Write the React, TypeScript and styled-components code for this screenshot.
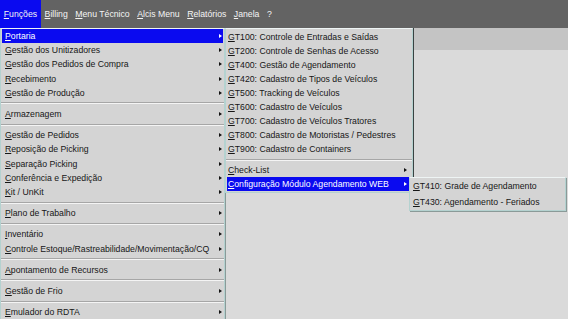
import styled, {createGlobalStyle} from "styled-components";
import React from "react";

const GlobalStyle = createGlobalStyle`
  html, body {
    margin: 0;
    padding: 0;
    background: #dadada;
    overflow: hidden;
  }
  body {
    font-family: "Liberation Sans", Arial, sans-serif;
    font-size: 8.7px;
    color: #161616;
  }
`
const Screen = styled.div`
  width: 568px;
  height: 319px;
  display: flex;
  flex-direction: column;
  overflow: hidden;
`
const MenuBar = styled.div`
  height: 28px;
  flex-shrink: 0;
  display: flex;
  align-items: stretch;
  background: #636363;
  position: relative;
  z-index: 2;
`
const BarItem = styled.div<{ $active?: boolean }>`
  position: relative;
  display: flex;
  align-items: center;
  padding: 0 3.75px;
  color: #f4f4f4;
  background: ${p => p.$active ? '#0a0af0' : 'transparent'};
  white-space: nowrap;
`
const Toolbar = styled.div`
  height: 22px;
  flex-shrink: 0;
  background: #c4c4c4;
`
const Canvas = styled.div`
  flex: 1;
  background: #dadada;
`
const Dropdown = styled.div<{ $width: number, $left: string, $top: string, $pad?: string, $shadow?: boolean }>`
  position: absolute;
  left: ${p => p.$left};
  top: ${p => p.$top};
  width: ${p => p.$width}px;
  box-sizing: border-box;
  background: #d4d4d4;
  border: 1px solid #b4d2d0;
  border-top-color: #eef4f4;
  padding: ${p => p.$pad || '0 1px'};
  box-shadow: ${p => p.$shadow ? '1px 0 0 #3a4242' : '1px 1px 0 #8a9a98'};
  color: #161616;
  z-index: 3;
`
const Item = styled.div<{ $active?: boolean, $h: number, $indent: number, $arrowGap: number }>`
  position: relative;
  display: flex;
  align-items: center;
  justify-content: space-between;
  height: ${p => p.$h}px;
  padding: 0 ${p => p.$arrowGap}px 0 ${p => p.$indent}px;
  background: ${p => p.$active ? '#0a0af0' : 'transparent'};
  color: ${p => p.$active ? '#ffffff' : '#161616'};
  white-space: nowrap;
`
const Arrow = styled.span<{ $active?: boolean }>`
  width: 0;
  height: 0;
  border-top: 2.5px solid transparent;
  border-bottom: 2.5px solid transparent;
  border-left: 3px solid ${p => p.$active ? '#ffffff' : '#111111'};
`
const Separator = styled.div`
  height: 0;
  margin: 2.5px -1px;
  border-top: 1px solid #a6a6a6;
  border-bottom: 1px solid #f4f4f4;
`

type Entry = { label: string, sub?: boolean } | 'sep'

const mainMenu: Entry[] = [
    {label: 'Portaria', sub: true},
    {label: 'Gestão dos Unitizadores', sub: true},
    {label: 'Gestão dos Pedidos de Compra', sub: true},
    {label: 'Recebimento', sub: true},
    {label: 'Gestão de Produção', sub: true},
    'sep',
    {label: 'Armazenagem', sub: true},
    'sep',
    {label: 'Gestão de Pedidos', sub: true},
    {label: 'Reposição de Picking', sub: true},
    {label: 'Separação Picking', sub: true},
    {label: 'Conferência e Expedição', sub: true},
    {label: 'Kit / UnKit', sub: true},
    'sep',
    {label: 'Plano de Trabalho', sub: true},
    'sep',
    {label: 'Inventário', sub: true},
    {label: 'Controle Estoque/Rastreabilidade/Movimentação/CQ', sub: true},
    'sep',
    {label: 'Apontamento de Recursos', sub: true},
    'sep',
    {label: 'Gestão de Frio', sub: true},
    'sep',
    {label: 'Emulador do RDTA', sub: true},
]

const portaria: Entry[] = [
    {label: 'GT100: Controle de Entradas e Saídas'},
    {label: 'GT200: Controle de Senhas de Acesso'},
    {label: 'GT400: Gestão de Agendamento'},
    {label: 'GT420: Cadastro de Tipos de Veículos'},
    {label: 'GT500: Tracking de Veículos'},
    {label: 'GT600: Cadastro de Veículos'},
    {label: 'GT700: Cadastro de Veículos Tratores'},
    {label: 'GT800: Cadastro de Motoristas / Pedestres'},
    {label: 'GT900: Cadastro de Containers'},
    'sep',
    {label: 'Check-List', sub: true},
    {label: 'Configuração Módulo Agendamento WEB', sub: true},
]

const agendamento: Entry[] = [
    {label: 'GT410: Grade de Agendamento'},
    {label: 'GT430: Agendamento - Feriados'},
]

const Mnemonic = ({text}: { text: string }) => (
    <span><u>{text[0]}</u>{text.slice(1)}</span>
)

const bar = ['Funções', 'Billing', 'Menu Técnico', 'Alcis Menu', 'Relatórios', 'Janela']

const App = () => {
    const agendaMenu = (
        <Dropdown $width={157} $left="calc(100% - 2px)" $top="0px" $pad="0 1px">
            {agendamento.map((e, i) => e === 'sep' ? <Separator key={i}/> :
                <Item key={i} $h={16} $indent={2} $arrowGap={3}>
                    <Mnemonic text={e.label}/>
                </Item>
            )}
        </Dropdown>
    )
    const portariaMenu = (
        <Dropdown $width={188} $left="calc(100% + 2px)" $top="-1px" $pad="1px" $shadow>
            {portaria.map((e, i) => {
                if (e === 'sep') return <Separator key={i}/>
                const active = e.label.startsWith('Configura')
                return (
                    <Item key={i} $active={active} $h={14} $indent={1} $arrowGap={4}>
                        <Mnemonic text={e.label}/>
                        {e.sub && <Arrow $active={active}/>}
                        {active && agendaMenu}
                    </Item>
                )
            })}
        </Dropdown>
    )
    return (
        <Screen>
            <GlobalStyle/>
            <MenuBar>
                {bar.map((b, i) => (
                    <BarItem key={b} $active={i === 0}>
                        <Mnemonic text={b}/>
                        {i === 0 && (
                            <Dropdown $width={225} $left="0px" $top="100%">
                                {mainMenu.map((e, j) => {
                                    if (e === 'sep') return <Separator key={j}/>
                                    const active = j === 0
                                    return (
                                        <Item key={j} $active={active} $h={14.2} $indent={3} $arrowGap={1}>
                                            <Mnemonic text={e.label}/>
                                            {e.sub && <Arrow $active={active}/>}
                                            {active && portariaMenu}
                                        </Item>
                                    )
                                })}
                            </Dropdown>
                        )}
                    </BarItem>
                ))}
                <BarItem>?</BarItem>
            </MenuBar>
            <Toolbar/>
            <Canvas/>
        </Screen>
    )
}

export default App
